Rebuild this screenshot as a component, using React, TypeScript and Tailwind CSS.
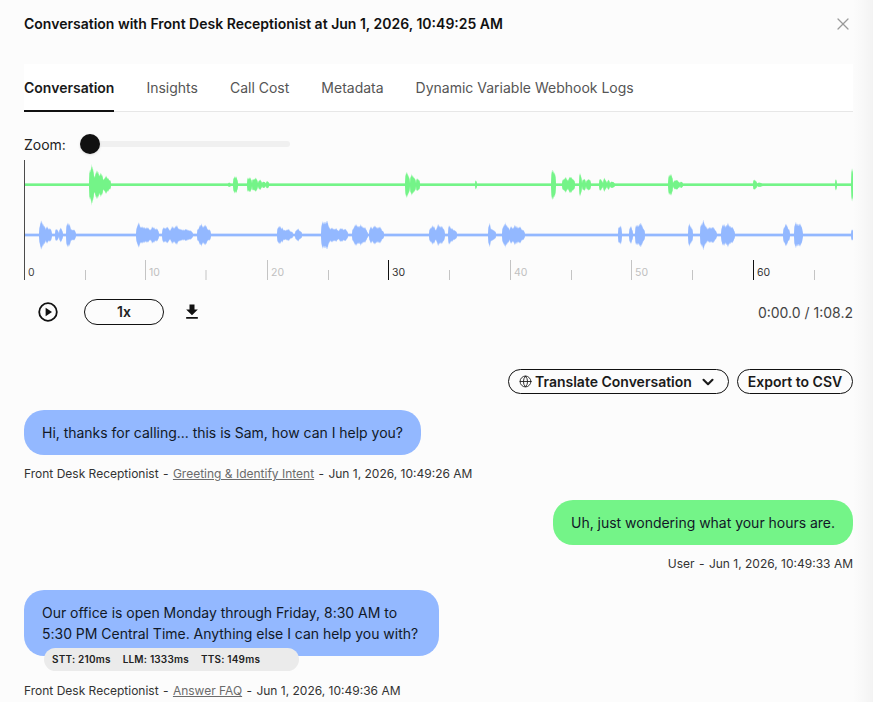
import React from "react";
import { ChevronDown, Globe, X } from "lucide-react";
import { MdFileDownload } from "react-icons/md";

type Burst = [number, number, number];

const greenBursts: Burst[] = [
  [89, 95, 18], [94, 104, 13], [103, 111, 8],
  [228, 231, 2], [233, 238, 9], [247, 252, 8], [252, 258, 7], [258, 262, 5], [262, 266, 3], [266, 269, 4],
  [405, 410, 12], [410, 416, 10], [416, 420, 7],
  [475, 477, 5],
  [551, 556, 15], [562, 569, 7], [568, 575, 8], [579, 582, 10], [582, 586, 6], [586, 591, 6],
  [599, 603, 6], [603, 607, 6], [607, 610, 5], [610, 615, 3],
  [668, 673, 11], [673, 680, 5], [680, 683, 3],
  [753, 757, 5], [757, 763, 2],
  [835, 837, 5],
  [851, 854, 17],
];

const blueBursts: Burst[] = [
  [39, 46, 13], [45, 52, 8], [55, 59, 6], [59, 63, 7], [66, 71, 13], [70, 76, 6],
  [136, 144, 11], [142, 152, 8], [150, 159, 8], [162, 172, 8], [170, 183, 9], [181, 193, 6], [197, 211, 10],
  [277, 284, 9], [283, 293, 6], [295, 302, 6],
  [321, 331, 14], [329, 340, 7], [338, 348, 7], [352, 368, 10], [369, 384, 9],
  [429, 437, 9], [436, 445, 10], [448, 452, 10], [451, 457, 6],
  [488, 491, 12], [490, 496, 6], [502, 510, 11], [509, 525, 9],
  [618, 622, 10], [629, 633, 8], [635, 645, 11],
  [688, 693, 10], [700, 708, 13], [707, 717, 8], [721, 735, 11],
  [783, 790, 10], [794, 803, 13],
  [851, 854, 6],
];

function noise(x: number, seed: number) {
  const v = Math.sin(x * 127.1 + seed * 311.7) * 43758.5453;
  return v - Math.floor(v);
}

function wavePath(bursts: Burst[], cy: number, seed: number, scale: number) {
  const pts: [number, number][] = [];
  for (let x = 24; x <= 853; x += 0.5) {
    let amp = 0;
    for (const [a, b, h] of bursts) {
      if (x >= a && x <= b) {
        const t = (x - a) / (b - a);
        const env = Math.pow(Math.sin(Math.PI * Math.pow(t, 0.7)), 0.4);
        amp = Math.max(amp, h * env);
      }
    }
    const slow = 0.9 + 0.1 * Math.sin(x * 1.3 + seed);
    const n = slow * (0.78 + 0.22 * noise(x, seed));
    pts.push([x, Math.max(1.25, amp > 3 ? amp * n * scale : amp)]);
  }
  const top = pts.map(([x, h]) => `${x},${(cy - h).toFixed(2)}`);
  const bottom = pts.reverse().map(([x, h]) => `${x},${(cy + h).toFixed(2)}`);
  return "M" + top.concat(bottom).join("L") + "Z";
}

const ticks: { x: number; major: boolean; label?: string; dark?: boolean }[] = [
  { x: 85.5, major: false },
  { x: 145.5, major: true, label: "10" },
  { x: 206, major: false },
  { x: 267.5, major: true, label: "20" },
  { x: 328.5, major: false },
  { x: 388.5, major: true, label: "30", dark: true },
  { x: 449.5, major: false },
  { x: 510.5, major: true, label: "40" },
  { x: 571.5, major: false },
  { x: 631.5, major: true, label: "50" },
  { x: 692.5, major: false },
  { x: 753.5, major: true, label: "60", dark: true },
  { x: 814.5, major: false },
];

function Waveform() {
  return (
    <svg width="829" height="122" viewBox="24 160 829 122" className="block">
      <path d={wavePath(greenBursts, 184.8, 1.3, 1.2)} fill="#74F488" opacity="0.55" />
      <path d={wavePath(greenBursts, 184.8, 1.3, 1.05)} fill="#74F488" />
      <path d={wavePath(blueBursts, 235, 4.1, 1.2)} fill="#93B8FF" opacity="0.55" />
      <path d={wavePath(blueBursts, 235, 4.1, 1.05)} fill="#93B8FF" />
      <line x1="24.5" y1="160" x2="24.5" y2="280" stroke="#4b4b4b" strokeWidth="1" />
      <text x="28" y="276" fontSize="10.5" fill="#444" fontFamily="Inter">0</text>
      {ticks.map((t) => (
        <g key={t.x}>
          <line
            x1={t.x}
            x2={t.x}
            y1={t.major ? 260 : 270}
            y2={280}
            stroke={t.dark ? "#111" : "#c4c4c4"}
            strokeWidth="1"
          />
          {t.label ? (
            <text x={t.x + 3.5} y="276" fontSize="10.5" fill={t.dark ? "#333" : "#c0c0c0"} fontFamily="Inter">
              {t.label}
            </text>
          ) : null}
        </g>
      ))}
    </svg>
  );
}

function PlayIcon() {
  return (
    <svg width="20" height="20" viewBox="0 0 20 20" fill="none">
      <circle cx="10" cy="10" r="8.8" stroke="#111" strokeWidth="1.8" />
      <path d="M7.6 5.8 14 10l-6.4 4.2z" fill="#111" />
    </svg>
  );
}

const tabs = ["Insights", "Call Cost", "Metadata", "Dynamic Variable Webhook Logs"];

function Dash() {
  return <span className="mx-[1px]">-</span>;
}

export default function App() {
  return (
    <div className="flex h-[702px] w-[873px] overflow-hidden bg-[#fcfcfc] text-[#0a0a0a] [font-family:Inter,sans-serif]">
      <div className="flex w-[853px] shrink-0 flex-col pl-6">
        <div className="flex h-[48px] items-center justify-between">
          <h1 className="text-sm leading-5 font-semibold text-[#111111]">
            Conversation with Front Desk Receptionist at Jun 1, 2026, 10:49:25 AM
          </h1>
          <X size={20} strokeWidth={1.5} className="text-[#9a9a9a]" />
        </div>

        <div className="mt-4 flex h-[48px] gap-8 border-b border-[#e7e7e7] bg-white text-sm">
          <div className="flex h-[48px] items-center border-b-2 border-[#111111] pt-[1px] font-semibold text-[#1a1a1a]">
            Conversation
          </div>
          {tabs.map((t) => (
            <div key={t} className="flex h-[47px] items-center text-[#555555]">
              {t}
            </div>
          ))}
        </div>

        <div className="mt-[22px] flex h-[22px] items-center">
          <span className="text-sm leading-5 text-[#222222]">Zoom:</span>
          <div className="relative mt-[-2px] ml-[14px] h-[6px] w-[210px] rounded-full bg-[#f0f0f0]">
            <div className="absolute top-[-7px] left-0 size-5 rounded-full bg-[#111111] shadow-sm" />
          </div>
        </div>

        <div className="mt-[4px]">
          <Waveform />
        </div>

        <div className="mt-[17px] flex h-[26px] items-center">
          <div className="ml-[14px]">
            <PlayIcon />
          </div>
          <div className="ml-[26px] flex h-[26px] w-20 items-center justify-center rounded-full border border-[#111111] text-sm font-semibold text-[#222222]">
            1x
          </div>
          <MdFileDownload size={20} className="ml-[18px] text-[#111111]" />
          <span className="mt-[2px] ml-auto text-sm text-[#444444]">0:00.0 / 1:08.2</span>
        </div>

        <div className="mt-[44px] flex justify-end gap-2">
          <div className="flex h-[25px] w-[221px] items-center rounded-full border border-[#111111] pl-[10px] text-sm font-semibold text-[#1a1a1a]">
            <Globe size={13} strokeWidth={1.6} />
            <span className="ml-[3px]">Translate Conversation</span>
            <ChevronDown size={18} strokeWidth={2.8} className="ml-[7px]" />
          </div>
          <div className="flex h-[25px] w-[116px] items-center justify-center rounded-full border border-[#111111] text-sm font-semibold text-[#1a1a1a]">
            Export to CSV
          </div>
        </div>

        <div className="mt-4 self-start rounded-[20px] bg-[#93B8FF] px-[18px] py-[12px] text-sm leading-[21px] tracking-[-0.02px] text-[#111827]">
          Hi, thanks for calling... this is Sam, how can I help you?
        </div>
        <div className="mt-[10px] text-xs leading-[18px] text-[#333333]">
          Front Desk Receptionist <Dash /> <span className="text-[#6b6b6b] underline">Greeting &amp; Identify Intent</span> <Dash /> Jun 1, 2026, 10:49:26 AM
        </div>

        <div className="mt-[17px] self-end rounded-[20px] bg-[#74F488] px-[18px] py-[12px] text-sm leading-[21px] tracking-[-0.02px] text-[#111827]">
          Uh, just wondering what your hours are.
        </div>
        <div className="mt-[10px] self-end text-xs leading-[18px] text-[#333333]">
          User <Dash /> Jun 1, 2026, 10:49:33 AM
        </div>

        <div className="relative mt-[17px] self-start rounded-[20px] bg-[#93B8FF] py-[12px] pr-[21px] pl-[18px] text-sm leading-[21px] tracking-[-0.02px] text-[#111827]">
          Our office is open Monday through Friday, 8:30 AM to
          <br />
          5:30 PM Central Time. Anything else I can help you with?
          <div className="absolute top-[58px] left-[20px] flex h-[23px] w-[255px] items-center gap-3 rounded-full bg-[#ebebeb] pl-2 text-[10px] font-semibold tracking-[0.02em] text-[#222222]">
            <span>STT: 210ms</span>
            <span>LLM: 1333ms</span>
            <span>TTS: 149ms</span>
          </div>
        </div>
        <div className="mt-[26px] text-xs leading-[18px] text-[#333333]">
          Front Desk Receptionist <Dash /> <span className="text-[#6b6b6b] underline">Answer FAQ</span> <Dash /> Jun 1, 2026, 10:49:36 AM
        </div>
      </div>
      <div className="h-full flex-1 bg-gradient-to-r from-[#fcfcfc] via-[#f8f8f8] to-[#f3f3f3]" />
    </div>
  );
}
